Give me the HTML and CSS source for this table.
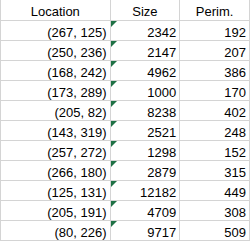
FILE: index.html
```html
<!DOCTYPE html>
<html>
<head>
<meta charset="utf-8">
<link rel="stylesheet" href="styles.css">
</head>
<body>
<table class="sheet">
  <tr class="head"><td>Location</td><td>Size</td><td>Perim.</td></tr>
  <tr><td>(267, 125)</td><td class="flag">2342</td><td>192</td></tr>
  <tr><td>(250, 236)</td><td class="flag">2147</td><td>207</td></tr>
  <tr><td>(168, 242)</td><td class="flag">4962</td><td>386</td></tr>
  <tr><td>(173, 289)</td><td class="flag">1000</td><td>170</td></tr>
  <tr><td>(205, 82)</td><td class="flag">8238</td><td>402</td></tr>
  <tr><td>(143, 319)</td><td class="flag">2521</td><td>248</td></tr>
  <tr><td>(257, 272)</td><td class="flag">1298</td><td>152</td></tr>
  <tr><td>(266, 180)</td><td class="flag">2879</td><td>315</td></tr>
  <tr><td>(125, 131)</td><td class="flag">12182</td><td>449</td></tr>
  <tr><td>(205, 191)</td><td class="flag">4709</td><td>308</td></tr>
  <tr><td>(80, 226)</td><td class="flag">9717</td><td>509</td></tr>
</table>
</body>
</html>
```
FILE: styles.css
```css
html, body {
  margin: 0;
  padding: 0;
  background: #ffffff;
}
.sheet {
  border-collapse: collapse;
  table-layout: fixed;
  font-family: "Liberation Sans", Arial, sans-serif;
  font-size: 13px;
  color: #000000;
}
.sheet td {
  box-sizing: border-box;
  height: 20px;
  padding: 4px 3px 0 3px;
  line-height: 15px;
  vertical-align: top;
  text-align: right;
  border-right: 1px solid #d4d4d4;
  border-bottom: 1px solid #d4d4d4;
  white-space: nowrap;
  position: relative;
}
.sheet td:first-child {
  border-left: 1px solid #d4d4d4;
  width: 110px;
}
.sheet td:nth-child(2) { width: 70px; }
.sheet td:nth-child(3) { width: 70px; }
.sheet .head td { text-align: center; }
.flag::before {
  content: "";
  position: absolute;
  left: 0;
  top: 0;
  width: 0;
  height: 0;
  border-top: 6px solid #1e7145;
  border-right: 6px solid transparent;
}
```
